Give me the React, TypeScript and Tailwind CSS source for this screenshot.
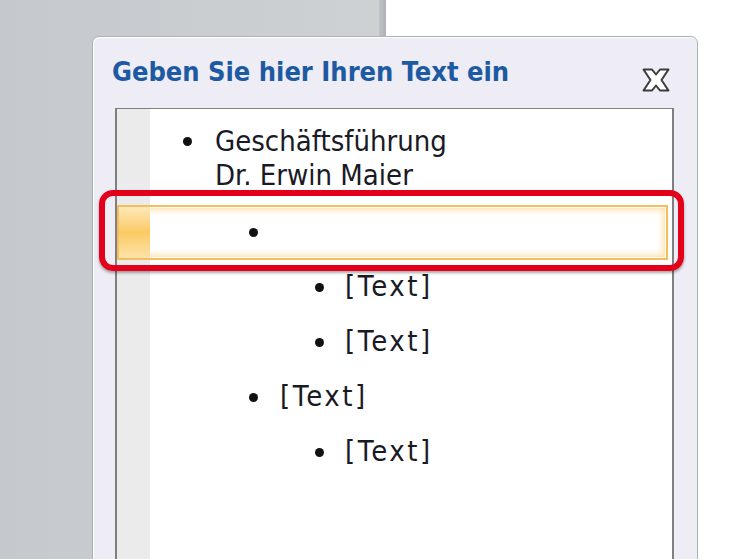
import React from "react";

type Row = { level: 1 | 2 | 3; lines: string[]; selected?: boolean };

const rows: Row[] = [
  { level: 2, lines: [""], selected: true },
  { level: 3, lines: ["[Text]"] },
  { level: 3, lines: ["[Text]"] },
  { level: 2, lines: ["[Text]"] },
  { level: 3, lines: ["[Text]"] },
];

const padFor: Record<number, string> = {
  1: "pl-[66px]",
  2: "pl-[132px]",
  3: "pl-[198px]",
};
const gapFor: Record<number, string> = {
  1: "ml-[24px]",
  2: "ml-[22px]",
  3: "ml-[21px]",
};

function Bullet() {
  return <span className="block w-[9px] h-[9px] rounded-full bg-[#111] shrink-0" />;
}

function CloseIcon() {
  return (
    <svg width="28" height="24" viewBox="0 0 28 24">
      <path
        d="M1.5,1.5 L10,1.5 L14,6.5 L18,1.5 L26.5,1.5 L19.5,12 L26.5,22.5 L18,22.5 L14,17.5 L10,22.5 L1.5,22.5 L8.5,12 Z"
        fill="#ffffff"
        stroke="#3c3c3c"
        strokeWidth="2"
        strokeLinejoin="round"
      />
    </svg>
  );
}

export default function App() {
  const font = "font-['DejaVu_Sans_Condensed','DejaVu_Sans',sans-serif]";
  return (
    <div className="relative w-[745px] h-[559px] overflow-hidden bg-white flex">
      {/* desktop background */}
      <div className="w-[386px] h-full flex">
        <div className="flex-1 h-full bg-gradient-to-r from-[#c5c8cc] to-[#ced1d4]" />
        <div className="w-[7px] h-full bg-gradient-to-r from-[#bfc2c6] to-[#aeb1b5]" />
      </div>
      <div className="flex-1 h-full bg-white" />

      {/* dialog window */}
      <div className="absolute left-[92px] top-[36px] w-[606px] h-[540px] rounded-t-[7px] border border-[#a5b6b6] bg-[#eeedf5] shadow-[inset_1px_1px_0_#ffffff] flex flex-col">
        <div className="h-[32px] mt-[19px] flex items-start justify-between pl-[19px] pr-[27px]">
          <div className={`${font} text-[27px] leading-[32px] font-bold text-[#1d5aa2]`}>
            Geben Sie hier Ihren Text ein
          </div>
          <div className="mt-[12px] h-[24px]">
            <CloseIcon />
          </div>
        </div>

        {/* text pane */}
        <div className="ml-[22px] mt-[20px] w-[559px] flex-1 border-l-2 border-t border-r-2 border-[#7f7f7f] bg-white flex">
          <div className="flex-1 flex flex-col relative">
            {/* gutter background */}
            <div className="absolute left-0 top-0 bottom-0 w-[33px] bg-[#ebebeb]" />
            <div className={`relative ${font} text-[29px] leading-[34px] text-[#1a1a26]`}>
              <div className="pt-[15px] pb-[13px] flex items-start pl-[66px]">
                <div className="h-[34px] flex items-center">
                  <Bullet />
                </div>
                <div className="ml-[23px]">
                  <div>Geschäftsführung</div>
                  <div>Dr. Erwin Maier</div>
                </div>
              </div>
              {rows.map((r, i) =>
                r.selected ? (
                  <div
                    key={i}
                    className="mr-[4px] h-[55px] flex border-2 border-[#f5bd62] bg-white shadow-[inset_0_0_0_1px_#fffaf0,inset_0_0_6px_3px_#fde0a8]"
                  >
                    <div className="w-[31px] h-full bg-gradient-to-b from-[#fde8b8] via-[#fbca62] to-[#fde3a8]" />
                    <div className="flex items-center pl-[99px]">
                      <Bullet />
                    </div>
                  </div>
                ) : (
                  <div key={i} className={`h-[55px] flex items-center ${padFor[r.level]}`}>
                    <Bullet />
                    <span className={`${gapFor[r.level]} mb-[4px] tracking-[2.5px]`}>{r.lines[0]}</span>
                  </div>
                )
              )}
            </div>
          </div>
        </div>
      </div>

      {/* red annotation frame */}
      <div className="absolute left-[99px] top-[190px] w-[585px] h-[81px] rounded-[14px] border-[6px] border-[#e3001b] shadow-[0_2px_3px_rgba(0,0,0,0.35)]" />
    </div>
  );
}
